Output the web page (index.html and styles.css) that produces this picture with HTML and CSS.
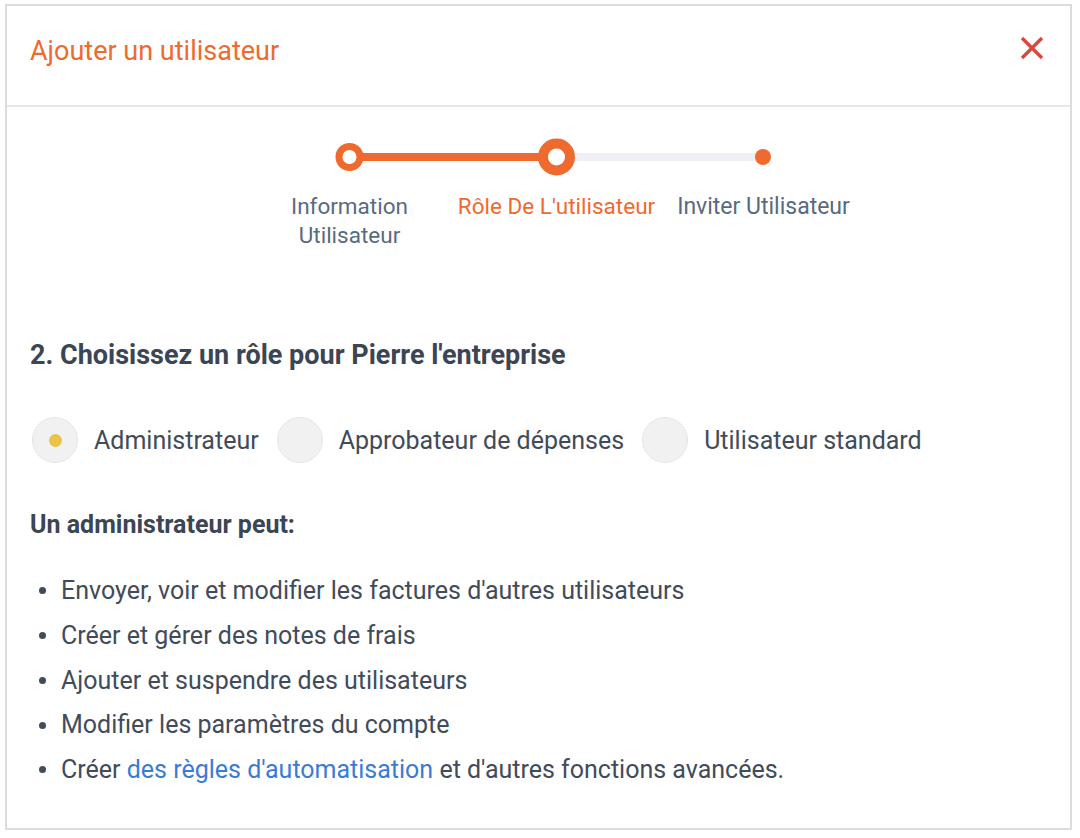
FILE: index.html
```html
<!DOCTYPE html>
<html lang="fr">
<head>
<meta charset="utf-8">
<title>Ajouter un utilisateur</title>
<link rel="stylesheet" href="styles.css">
</head>
<body>
<div class="modal">
  <header class="modal-header">
    <h1 class="modal-title">Ajouter un utilisateur</h1>
    <button class="close" aria-label="Fermer">
      <svg width="24" height="24" viewBox="0 0 24 24"><path d="M2 2 L22 22 M22 2 L2 22" stroke="#d8493e" stroke-width="3.4" stroke-linecap="butt" fill="none"/></svg>
    </button>
  </header>
  <div class="modal-body">
    <div class="stepper">
      <svg class="track" width="621" height="40" viewBox="0 0 621 40">
        <line x1="310.5" y1="20" x2="517" y2="20" stroke="#eef0f4" stroke-width="8"/>
        <line x1="103.5" y1="20" x2="310.5" y2="20" stroke="#ef6a2e" stroke-width="8"/>
        <circle cx="103.5" cy="20" r="10.5" fill="#fff" stroke="#ef6a2e" stroke-width="7"/>
        <circle cx="310.5" cy="20" r="13.5" fill="#fff" stroke="#ef6a2e" stroke-width="10"/>
        <circle cx="517" cy="20" r="8" fill="#ef6a2e"/>
      </svg>
      <div class="step-labels">
        <span class="step-label">Information Utilisateur</span>
        <span class="step-label active">Rôle De L'utilisateur</span>
        <span class="step-label">Inviter Utilisateur</span>
      </div>
    </div>

    <h2 class="section-title">2. Choisissez un rôle pour Pierre l'entreprise</h2>

    <div class="roles">
      <label class="role"><span class="radio checked"></span>Administrateur</label>
      <label class="role"><span class="radio"></span>Approbateur de dépenses</label>
      <label class="role"><span class="radio"></span>Utilisateur standard</label>
    </div>

    <h3 class="perm-title">Un administrateur peut:</h3>
    <ul class="perms">
      <li>Envoyer, voir et modifier les factures d'autres utilisateurs</li>
      <li>Créer et gérer des notes de frais</li>
      <li>Ajouter et suspendre des utilisateurs</li>
      <li>Modifier les paramètres du compte</li>
      <li>Créer <a href="#">des règles d'automatisation</a> et d'autres fonctions avancées.</li>
    </ul>
  </div>
</div>
</body>
</html>
```

FILE: styles.css
```css
* { box-sizing: border-box; }
html, body { margin: 0; padding: 0; background: #fff; }
body {
  font-family: Roboto, "Liberation Sans", Arial, sans-serif;
  color: #414b5a;
  padding: 4px 0 0 5px;
}
.modal {
  width: 1067px;
  height: 826px;
  border: 2px solid #dcdcdc;
  background: #fff;
}
.modal-header {
  height: 101px;
  border-bottom: 2px solid #e3e6ea;
  display: flex;
  align-items: center;
  justify-content: space-between;
  padding: 0 26px 0 23px;
}
.modal-title {
  margin: 0;
  font-size: 27px;
  font-weight: 400;
  color: #ef6a2e;
  position: relative;
  top: -5px;
}
.close {
  border: 0;
  background: none;
  padding: 0;
  width: 24px;
  height: 24px;
  display: flex;
  position: relative;
  top: -8px;
}
.modal-body {
  padding: 30px 23px 0 23px;
}
.stepper {
  margin-left: 216px;
  width: 621px;
}
.track { display: block; }
.step-labels {
  display: grid;
  grid-template-columns: 207px 207px 207px;
  margin-top: 15px;
}
.step-label {
  text-align: center;
  font-size: 22.5px;
  line-height: 29px;
  color: #5a6a7e;
  padding: 0 40px;
}
.step-label.active { color: #ef6a2e; padding: 0; }
.step-label:last-child { padding: 0; font-size: 23px; }
.section-title {
  margin: 89px 0 0 0;
  font-size: 27px;
  line-height: 32px;
  font-weight: 700;
  color: #3b4554;
}
.roles {
  margin-top: 46px;
  display: flex;
  align-items: center;
  gap: 18px;
  margin-left: 2px;
}
.role {
  display: flex;
  align-items: center;
  gap: 16px;
  font-size: 25px;
  color: #414b5a;
}
.radio {
  width: 46px;
  height: 46px;
  border-radius: 50%;
  background: #f1f1f1;
  border: 1px solid #e6e6e6;
  display: flex;
  align-items: center;
  justify-content: center;
}
.radio.checked::after {
  content: "";
  width: 13px;
  height: 13px;
  border-radius: 50%;
  background: #eac446;
}
.perm-title {
  margin: 47px 0 0 0;
  font-size: 25px;
  line-height: 30px;
  font-weight: 700;
  color: #3b4554;
}
.perms {
  list-style: none;
  margin: 29px 0 0 0;
  padding: 0;
}
.perms li {
  font-size: 25px;
  line-height: 44.75px;
  color: #414b5a;
}
.perms li::before {
  content: "";
  display: inline-block;
  vertical-align: middle;
  width: 7px;
  height: 7px;
  border-radius: 50%;
  background: #414b5a;
  margin: -3px 15px 0 9px;
}
.perms a {
  color: #3a7bd5;
  text-decoration: none;
}
```
